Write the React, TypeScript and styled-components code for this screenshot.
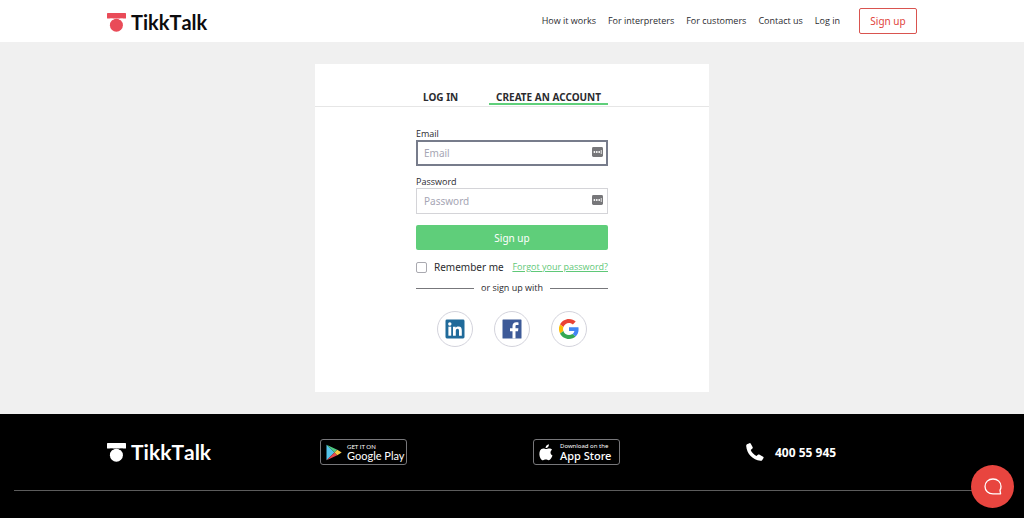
import React from 'react';
import styled, { createGlobalStyle } from 'styled-components';

const GlobalStyle = createGlobalStyle`
  *, *::before, *::after { box-sizing: border-box; }
  body {
    margin: 0;
    background: #000;
    color: #2b2b2f;
    font-family: "Open Sans", "Noto Sans", sans-serif;
    font-size: 9px;
  }
  a { color: inherit; text-decoration: none; }
  button, input { font-family: "Noto Sans", "Open Sans", sans-serif; }
`;

const Header = styled.header`
  background: #fff;
`;

const HeaderInner = styled.div`
  display: flex;
  align-items: center;
  justify-content: space-between;
  max-width: 810px;
  height: 42px;
  margin: 0 auto;
`;

const LogoLink = styled.a<{ $light?: boolean }>`
  display: inline-flex;
  align-items: center;
  gap: 5px;
  padding-top: ${(p) => (p.$light ? 0 : 2)}px;
  color: ${(p) => (p.$light ? '#fff' : '#0c0c0e')};
  font-family: Lato, sans-serif;
  font-size: ${(p) => (p.$light ? 21 : 20)}px;
  font-weight: 700;
  font-kerning: none;
  line-height: 22px;
`;

const Nav = styled.nav`
  display: flex;
  align-items: center;
  gap: 12px;
`;

const NavLink = styled.a`
  line-height: 14px;
`;

const OutlineButton = styled.button`
  width: 58px;
  height: 26px;
  margin-left: 7px;
  padding: 0;
  border: 1px solid #d9534f;
  border-radius: 2px;
  background: #fff;
  color: #e0433c;
  font-size: 10px;
`;

const Main = styled.main`
  padding: 22px 16px;
  background: #f0f0f0;
`;

const Card = styled.section`
  max-width: 394px;
  margin: 0 auto;
  padding-bottom: 45px;
  background: #fff;
`;

const TabBar = styled.div`
  padding-top: 28px;
  border-bottom: 1px solid #e6e6e6;
`;

const Column = styled.div`
  width: 192px;
  margin: 0 auto;
`;

const Tabs = styled(Column)`
  display: flex;
  justify-content: space-between;
  padding-bottom: 1px;
`;

const Tab = styled.button<{ $active?: boolean }>`
  padding: 0 7px;
  border: 0;
  border-bottom: 2px solid ${(p) => (p.$active ? '#5fcf7a' : 'transparent')};
  background: none;
  color: #2b2b2f;
  font-size: 10px;
  font-weight: 700;
  line-height: 11px;
`;

const Form = styled.form`
  width: 192px;
  margin: 0 auto;
  padding-top: 20px;
`;

const Field = styled.div`
  margin-bottom: 9px;
`;

const Label = styled.label`
  display: block;
  line-height: 13px;
`;

const InputWrap = styled.div`
  position: relative;
`;

const Input = styled.input<{ $focused?: boolean }>`
  display: block;
  width: 100%;
  height: 26px;
  padding: 0 24px 0 ${(p) => (p.$focused ? 6 : 7)}px;
  border: ${(p) => (p.$focused ? '2px solid #777c8b' : '1px solid #d4d4d8')};
  border-radius: 0;
  outline: none;
  background: #fff;
  color: #2b2b2f;
  font-size: 10px;
  &::placeholder { color: #a6a6b4; opacity: 1; }
`;

const FieldIcon = styled.svg`
  position: absolute;
  top: 7px;
  right: 5px;
`;

const SubmitButton = styled.button`
  display: block;
  width: 100%;
  height: 25px;
  margin-top: 11px;
  padding: 0;
  border: 0;
  border-radius: 2px;
  background: #5fce7a;
  color: #fff;
  font-size: 10px;
`;

const OptionsRow = styled.div`
  display: flex;
  align-items: center;
  justify-content: space-between;
  height: 14px;
  margin-top: 10px;
`;

const Remember = styled.label`
  display: flex;
  align-items: center;
  gap: 7px;
  font-family: "Noto Sans", sans-serif;
  font-size: 10px;
  line-height: 14px;
`;

const Checkbox = styled.input`
  appearance: none;
  width: 11px;
  height: 11px;
  margin: 0;
  border: 1px solid #a9a9b0;
  border-radius: 2px;
  background: #fff;
  &:checked { background: #5fce7a; }
`;

const ForgotLink = styled.a`
  color: #5fc878;
  line-height: 14px;
  text-decoration: underline;
`;

const Divider = styled.div`
  display: flex;
  align-items: center;
  gap: 7px;
  margin-top: 7px;
  line-height: 14px;
  &::before, &::after {
    content: "";
    flex: 1;
    height: 1px;
    background: #77777b;
  }
`;

const SocialRow = styled.div`
  display: flex;
  justify-content: center;
  gap: 21px;
  margin-top: 16px;
`;

const SocialButton = styled.button`
  display: flex;
  align-items: center;
  justify-content: center;
  width: 36px;
  height: 36px;
  padding: 0;
  border: 1px solid #d3d3dc;
  border-radius: 50%;
  background: #fff;
`;

const Footer = styled.footer`
  padding: 25px 14px 27px;
  background: #000;
  color: #fff;
`;

const FooterGrid = styled.div`
  display: grid;
  grid-template-columns: repeat(4, 1fr);
  align-items: center;
  max-width: 852px;
  margin: 0 auto;
  padding-bottom: 25px;
`;

const FooterCell = styled.div`
  display: flex;
  padding-left: 21px;
`;

const StoreBadge = styled.a`
  display: flex;
  align-items: center;
  gap: 5px;
  width: 87px;
  height: 26px;
  padding-left: 5px;
  border: 1px solid #77777a;
  border-radius: 3px;
`;

const BadgeText = styled.span<{ $apple?: boolean }>`
  display: flex;
  flex-direction: column;
  padding-left: ${(p) => (p.$apple ? 2 : 0)}px;
  font-family: ${(p) => (p.$apple ? '"Noto Sans"' : 'Lato')}, sans-serif;
  font-size: 11px;
  font-weight: ${(p) => (p.$apple ? 500 : 400)};
  line-height: 12px;
  white-space: nowrap;
`;

const BadgeSmall = styled.small`
  font-size: 6px;
  font-weight: 400;
  line-height: 7px;
`;

const Phone = styled.a`
  display: flex;
  align-items: center;
  gap: 11px;
  font-family: "Noto Sans", sans-serif;
  font-size: 12px;
  font-weight: 700;
`;

const Rule = styled.hr`
  margin: 0;
  border: 0;
  border-top: 1px solid #5c5c5c;
`;

const ChatButton = styled.button`
  position: fixed;
  right: 10px;
  bottom: 10px;
  display: flex;
  align-items: center;
  justify-content: center;
  width: 43px;
  height: 43px;
  padding: 0;
  border: 0;
  border-radius: 50%;
  background: #e8453f;
`;

const Logo = ({ light }: { light?: boolean }) => (
  <LogoLink href="#" $light={light}>
    <svg width="19" height="19" viewBox="0 0 19 19" fill={light ? '#fff' : '#e94b58'} aria-hidden="true">
      <rect x="0" y="0" width="19" height="5.6" rx="0.6" />
      <circle cx="9.4" cy="12.2" r="6.5" />
      <path
        d="M2.8 6.2C4.6 6 5.6 6 6.4 6.5M16 6.2C14.2 6 13.2 6 12.4 6.5"
        fill="none"
        stroke={light ? '#000' : '#fff'}
        strokeWidth="0.9"
      />
    </svg>
    TikkTalk
  </LogoLink>
);

const ManagerIcon = () => (
  <FieldIcon width="11" height="10" viewBox="0 0 11 10" aria-hidden="true">
    <rect width="11" height="10" rx="1.4" fill="#77777a" />
    <circle cx="2.4" cy="5" r="0.9" fill="#fff" />
    <circle cx="4.8" cy="5" r="0.9" fill="#fff" />
    <circle cx="7.2" cy="5" r="0.9" fill="#fff" />
    <rect x="8.8" y="3" width="0.8" height="4" fill="#fff" />
  </FieldIcon>
);

const LinkedInIcon = () => (
  <svg width="20" height="20" viewBox="0 0 20 20" aria-hidden="true">
    <rect x="0.5" y="0.5" width="19" height="19" rx="1.4" fill="#1f6a9a" />
    <g fill="#fff">
      <circle cx="4.8" cy="5" r="1.7" />
      <rect x="3.4" y="7.7" width="2.8" height="9" />
      <path d="M8 7.7h2.7v1.2c.5-.9 1.5-1.4 2.8-1.4 2.6 0 3.3 1.6 3.3 4.2v5H14v-4.4c0-1.4-.2-2.5-1.5-2.5-1.4 0-1.7 1-1.7 2.4v4.5H8z" />
    </g>
  </svg>
);

const FacebookIcon = () => (
  <svg width="20" height="20" viewBox="0 0 20 20" aria-hidden="true">
    <rect x="0.5" y="0.5" width="19" height="19" rx="0.6" fill="#3d5a98" />
    <path
      d="M13.5 19.5v-7.3H16l.4-2.9h-2.9V7.5c0-.9.3-1.4 1.4-1.4h1.6V3.4c-.5 0-1.2-.1-2.2-.1-2.3 0-3.8 1.4-3.8 3.8v2.2H8v2.9h2.5v7.3z"
      fill="#fff"
    />
  </svg>
);

const GoogleIcon = () => (
  <svg width="20" height="20" viewBox="0 0 48 48" aria-hidden="true">
    <path fill="#EA4335" d="M24 9.5c3.5 0 6.7 1.2 9.2 3.6l6.9-6.9C35.9 2.4 30.5 0 24 0 14.6 0 6.5 5.4 2.6 13.2l8 6.2C12.4 13.7 17.7 9.5 24 9.5z" />
    <path fill="#4285F4" d="M47 24.6c0-1.6-.2-3.1-.4-4.6H24v9h12.9c-.6 3-2.2 5.5-4.7 7.2l7.7 6C44.4 38 47 31.8 47 24.6z" />
    <path fill="#FBBC05" d="M10.5 28.6A14.5 14.5 0 0 1 10.5 19.4l-8-6.2A24 24 0 0 0 2.6 34.8z" />
    <path fill="#34A853" d="M24 48c6.5 0 11.9-2.1 15.9-5.8l-7.7-6c-2.2 1.5-4.9 2.3-8.2 2.3-6.3 0-11.6-4.2-13.5-9.9l-8 6.2C6.5 42.6 14.6 48 24 48z" />
  </svg>
);

const PlayIcon = () => (
  <svg width="16" height="17" viewBox="0 0 16 17" aria-hidden="true">
    <path d="M.5.7v15.6L8.5 8.5z" fill="#55c3ea" />
    <path d="M.5.7 8.5 8.5l2.8-2.7z" fill="#4fca83" />
    <path d="M.5 16.3 8.5 8.5l2.8 2.7z" fill="#e8474f" />
    <path d="M11.3 5.8 8.5 8.5l2.8 2.7 4.4-2.7z" fill="#f7c945" />
  </svg>
);

const AppleIcon = () => (
  <svg width="14" height="17" viewBox="0 0 14 17" fill="#fff" aria-hidden="true">
    <path d="M9.9.2c.1 1.1-.3 2.1-.9 2.8-.6.7-1.6 1.2-2.4 1.1-.1-1 .4-2 .9-2.6C8.1.8 9.1.3 9.9.2z" />
    <path d="M13.1 5.8c-1 .6-1.6 1.6-1.6 2.8 0 1.4.8 2.5 2 3-.3.9-.7 1.7-1.2 2.5-.7 1.1-1.5 2.2-2.7 2.2-1.1 0-1.5-.7-2.8-.7-1.3 0-1.7.7-2.8.7-1.1 0-1.9-1-2.6-2.1C.1 12 .1 8.3 1.1 6.5c.7-1.3 1.9-2.1 3.2-2.1 1.2 0 2 .7 2.9.7.9 0 1.7-.7 3.1-.7 1.1 0 2.2.5 2.8 1.4z" />
  </svg>
);

const PhoneIcon = () => (
  <svg width="18" height="18" viewBox="0 0 18 18" fill="#fff" aria-hidden="true">
    <path d="M1.5 1 3.5.2c.5-.2 1 0 1.3.5l1.9 3.5c.2.4.1.9-.3 1.3L4.7 6.9c.9 2.2 3 4.7 5.7 6.1l1.5-1.3c.4-.3.9-.4 1.3-.1l3.9 2.1c.5.3.7.8.4 1.3l-1.2 1.9c-.4.7-1.1 1-1.9.9C6.9 16.9.7 10.7.2 2.9c0-.8.5-1.6 1.3-1.9z" />
  </svg>
);

const ChatIcon = () => (
  <svg width="18" height="17" viewBox="0 0 18 17" fill="none" stroke="#fff" strokeWidth="1.3" strokeLinejoin="round" aria-hidden="true">
    <path d="M16.6 15.8l-.6-3.700C16.700 11 17 9.900 17 8.500 17 4.200 13.7 1 9 1S1 4.200 1 8.500 4.300 15.800 9 15.800z" />
  </svg>
);

const links = ['How it works', 'For interpreters', 'For customers', 'Contact us', 'Log in'];

export default function App() {
  return (
    <>
      <GlobalStyle />
      <Header>
        <HeaderInner>
          <Logo />
          <Nav>
            {links.map((text) => (
              <NavLink href="#" key={text}>{text}</NavLink>
            ))}
            <OutlineButton type="button">Sign up</OutlineButton>
          </Nav>
        </HeaderInner>
      </Header>
      <Main>
        <Card>
          <TabBar>
            <Tabs role="tablist">
              <Tab type="button" role="tab" aria-selected={false}>LOG IN</Tab>
              <Tab type="button" role="tab" aria-selected $active>CREATE AN ACCOUNT</Tab>
            </Tabs>
          </TabBar>
          <Form onSubmit={(e) => e.preventDefault()}>
            <Field>
              <Label htmlFor="email">Email</Label>
              <InputWrap>
                <Input id="email" type="email" placeholder="Email" $focused />
                <ManagerIcon />
              </InputWrap>
            </Field>
            <Field>
              <Label htmlFor="password">Password</Label>
              <InputWrap>
                <Input id="password" type="password" placeholder="Password" />
                <ManagerIcon />
              </InputWrap>
            </Field>
            <SubmitButton type="submit">Sign up</SubmitButton>
            <OptionsRow>
              <Remember>
                <Checkbox type="checkbox" />
                Remember me
              </Remember>
              <ForgotLink href="#">Forgot your password?</ForgotLink>
            </OptionsRow>
            <Divider>or sign up with</Divider>
            <SocialRow>
              <SocialButton type="button" aria-label="LinkedIn"><LinkedInIcon /></SocialButton>
              <SocialButton type="button" aria-label="Facebook"><FacebookIcon /></SocialButton>
              <SocialButton type="button" aria-label="Google"><GoogleIcon /></SocialButton>
            </SocialRow>
          </Form>
        </Card>
      </Main>
      <Footer>
        <FooterGrid>
          <FooterCell><Logo light /></FooterCell>
          <FooterCell>
            <StoreBadge href="#">
              <PlayIcon />
              <BadgeText>
                <BadgeSmall>GET IT ON</BadgeSmall>
                Google Play
              </BadgeText>
            </StoreBadge>
          </FooterCell>
          <FooterCell>
            <StoreBadge href="#">
              <AppleIcon />
              <BadgeText $apple>
                <BadgeSmall>Download on the</BadgeSmall>
                App Store
              </BadgeText>
            </StoreBadge>
          </FooterCell>
          <FooterCell>
            <Phone href="tel:40055945"><PhoneIcon />400 55 945</Phone>
          </FooterCell>
        </FooterGrid>
        <Rule />
      </Footer>
      <ChatButton type="button" aria-label="Open chat"><ChatIcon /></ChatButton>
    </>
  );
}
